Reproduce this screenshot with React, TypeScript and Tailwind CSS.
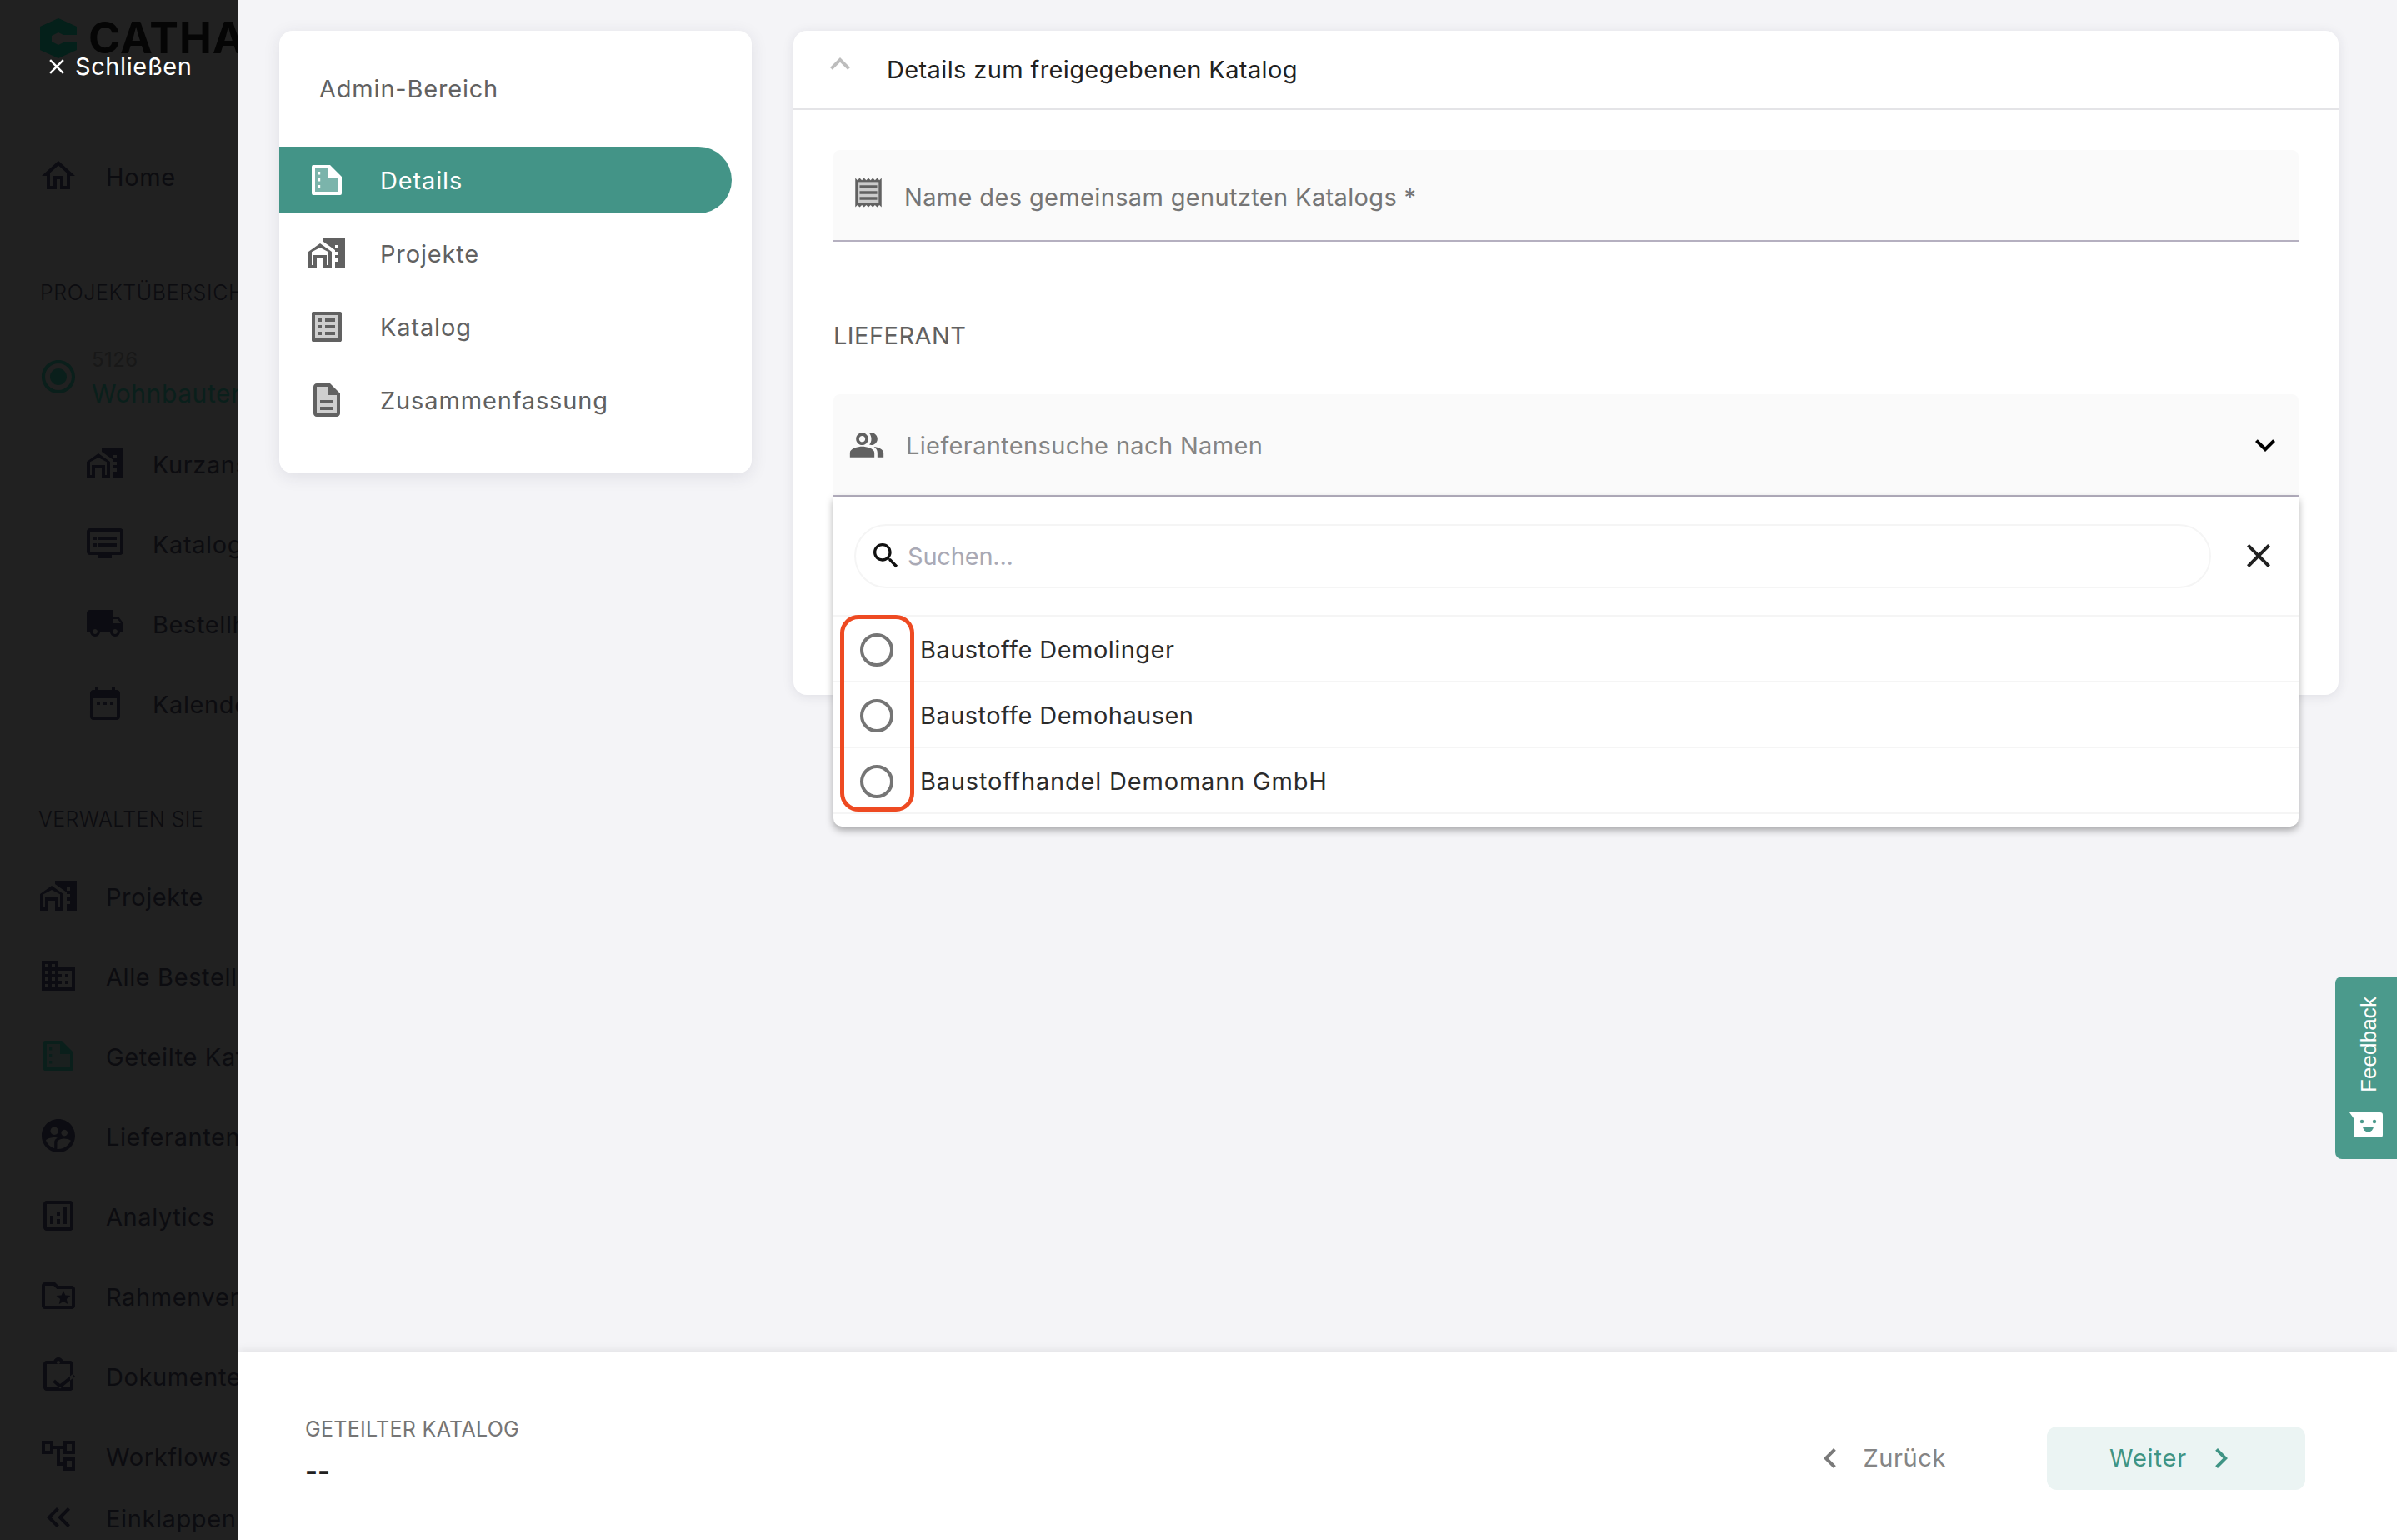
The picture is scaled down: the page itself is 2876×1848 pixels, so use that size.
import React from "react";

const P: Record<string, { d: string; l?: string }> = {
  home: { d: "M12 5.69l5 4.5V18h-2v-6H9v6H7v-7.81l5-4.5M12 3L2 12h3v8h6v-6h2v6h6v-8h3L12 3z" },
  work: { d: "M1 11v10h5v-6h4v6h5V11L8 6zM13 19v-7.9L8 8.5l-5 2.6V19h1v-6h8v6zM10 3v1.97l7 5V11h2v2h-2v2h2v2h-2v4h6V3H10zm9 6h-2V7h2v2z" },
  list: {
    l: "M5 5v14h14V5H5zm4 12H7v-2h2v2zm0-4H7v-2h2v2zm0-4H7V7h2v2zm8 8h-6v-2h6v2zm0-4h-6v-2h6v2zm0-4h-6V7h6v2z",
    d: "M11 7h6v2h-6zm0 4h6v2h-6zm0 4h6v2h-6zM7 7h2v2H7zm0 4h2v2H7zm0 4h2v2H7zM20.1 3H3.9c-.5 0-.9.4-.9.9v16.2c0 .4.4.9.9.9h16.2c.4 0 .9-.5.9-.9V3.9c0-.5-.5-.9-.9-.9zM19 19H5V5h14v14z",
  },
  desc: {
    l: "M13 4H6v16h12V9h-5V4zm3 14H8v-2h8v2zm0-6v2H8v-2h8z",
    d: "M8 16h8v2H8zm0-4h8v2H8zm6-10H6c-1.1 0-2 .9-2 2v16c0 1.1.89 2 1.99 2H18c1.1 0 2-.9 2-2V8l-6-6zm4 18H6V4h7v5h5v11z",
  },
  snip: {
    l: "M5 5v14h14v-8h-6V5z",
    d: "M4 3h10l7 7v10a1 1 0 0 1-1 1H4a1 1 0 0 1-1-1V4a1 1 0 0 1 1-1zm1 2v14h14v-8h-6V5zM6.5 7h1.6v1.8H6.5zm0 4h1.6v1.8H6.5zm0 4h1.6v1.8H6.5z",
  },
  receipt: {
    l: "M5 4.91h14v14.18H5z",
    d: "M19.5 3.5L18 2l-1.5 1.5L15 2l-1.5 1.5L12 2l-1.5 1.5L9 2 7.5 3.5 6 2 4.5 3.5 3 2v20l1.5-1.5L6 22l1.5-1.5L9 22l1.5-1.5L12 22l1.5-1.5L15 22l1.5-1.5L18 22l1.5-1.5L21 22V2l-1.5 1.5zM19 19.09H5V4.91h14v14.18zM6 15h12v2H6zm0-4h12v2H6zm0-4h12v2H6z",
  },
  people: {
    d: "M16.67 13.13C18.04 14.06 19 15.32 19 17v3h4v-3c0-2.18-3.57-3.47-6.33-3.87zM15 12c2.21 0 4-1.79 4-4s-1.79-4-4-4c-.47 0-.91.1-1.33.24C14.5 5.27 15 6.58 15 8s-.5 2.73-1.33 3.76c.42.14.86.24 1.33.24zM9 12c2.21 0 4-1.79 4-4s-1.79-4-4-4-4 1.79-4 4 1.79 4 4 4zm0-6c1.1 0 2 .9 2 2s-.9 2-2 2-2-.9-2-2 .9-2 2-2zM9 13c-2.67 0-8 1.34-8 4v3h16v-3c0-2.66-5.33-4-8-4z",
  },
  dvr: { d: "M21 3H3c-1.1 0-2 .9-2 2v12c0 1.1.9 2 2 2h5v2h8v-2h5c1.1 0 2-.9 2-2V5c0-1.1-.9-2-2-2zm0 14H3V5h18v12zm-2-9H8v2h11V8zm0 4H8v2h11v-2zM7 8H5v2h2V8zm0 4H5v2h2v-2z" },
  truck: { d: "M20 8h-3V4H3c-1.1 0-2 .9-2 2v11h2c0 1.66 1.34 3 3 3s3-1.34 3-3h6c0 1.66 1.34 3 3 3s3-1.34 3-3h2v-5l-3-4zM6 18.5c-.83 0-1.5-.67-1.5-1.5s.67-1.5 1.5-1.5 1.5.67 1.5 1.5-.67 1.5-1.5 1.5zm13.5-9l1.96 2.5H17V9.5h2.5zm-1.5 9c-.83 0-1.5-.67-1.5-1.5s.67-1.5 1.5-1.5 1.5.67 1.5 1.5-.67 1.5-1.5 1.5z" },
  cal: { d: "M19 4h-1V2h-2v2H8V2H6v2H5c-1.11 0-1.99.9-1.99 2L3 20c0 1.1.89 2 2 2h14c1.1 0 2-.9 2-2V6c0-1.1-.9-2-2-2zm0 16H5V9h14v11zM7 11h2v2H7zm4 0h2v2h-2zm4 0h2v2h-2z" },
  domain: { d: "M12 7V3H2v18h20V7H12zM6 19H4v-2h2v2zm0-4H4v-2h2v2zm0-4H4V9h2v2zm0-4H4V5h2v2zm4 12H8v-2h2v2zm0-4H8v-2h2v2zm0-4H8V9h2v2zm0-4H8V5h2v2zm10 12h-8v-2h2v-2h-2v-2h2v-2h-2V9h8v10zm-2-8h-2v2h2v-2zm0 4h-2v2h2v-2z" },
  sup: { d: "M11.99 2c-5.52 0-10 4.48-10 10s4.48 10 10 10 10-4.48 10-10-4.48-10-10-10zm3.61 6.34c1.07 0 1.93.86 1.93 1.93 0 1.07-.86 1.93-1.93 1.93-1.07 0-1.93-.86-1.93-1.93-.01-1.07.86-1.93 1.93-1.93zm-6-1.58c1.3 0 2.36 1.06 2.36 2.36 0 1.3-1.06 2.36-2.36 2.36s-2.36-1.06-2.36-2.36c0-1.31 1.05-2.36 2.36-2.36zm0 9.13v3.75c-2.4-.75-4.3-2.6-5.14-4.96 1.05-1.12 3.67-1.69 5.14-1.69.53 0 1.2.08 1.9.22-1.64.87-1.9 2.02-1.9 2.68zM11.99 20c-.27 0-.53-.01-.79-.04v-4.07c0-1.42 2.94-2.13 4.4-2.13 1.07 0 2.92.39 3.84 1.15-1.17 2.97-4.06 5.09-7.45 5.09z" },
  ana: { d: "M19 3H5c-1.1 0-2 .9-2 2v14c0 1.1.9 2 2 2h14c1.1 0 2-.9 2-2V5c0-1.1-.9-2-2-2zm0 16H5V5h14v14zM7 12h2v5H7zM15 7h2v10h-2zM11 14h2v3h-2zM11 10h2v2h-2z" },
  folder: { d: "M20 6h-8l-2-2H4c-1.1 0-2 .9-2 2v12c0 1.1.9 2 2 2h16c1.1 0 2-.9 2-2V8c0-1.1-.9-2-2-2zm0 12H4V6h5.17l2 2H20v10zm-6.92-3.96L12.39 17 15 15.47 17.61 17l-.69-2.96 2.3-1.99-3.03-.26L15 9l-1.19 2.79-3.03.26z" },
  doc: { d: "M19 3h-4.18C14.4 1.84 13.3 1 12 1s-2.4.84-2.82 2H5c-1.1 0-2 .9-2 2v14c0 1.1.9 2 2 2h14c1.1 0 2-.9 2-2V5c0-1.1-.9-2-2-2zm-7 0c.55 0 1 .45 1 1s-.45 1-1 1-1-.45-1-1 .45-1 1-1zm7 16H5V5h14v14zM22 12.4l-1.4-1.4-7.6 6-3-2.6-1.4 1.4 4.4 4z" },
  tree: { d: "M22 11V3h-7v3H9V3H2v8h7V8h2v10h4v3h7v-8h-7v3h-2V8h2v3h7zM7 9H4V5h3v4zm10 6h3v4h-3v-4zm0-10h3v4h-3V5z" },
  dbl: { d: "M17.59 18 19 16.59 14.42 12 19 7.41 17.59 6l-6 6zM11 18l1.41-1.41L7.83 12l4.58-4.59L11 6l-6 6z" },
  radio: { d: "M12 7c-2.76 0-5 2.24-5 5s2.24 5 5 5 5-2.24 5-5-2.24-5-5-5zm0-5C6.48 2 2 6.48 2 12s4.48 10 10 10 10-4.48 10-10S17.52 2 12 2zm0 18c-4.42 0-8-3.58-8-8s3.58-8 8-8 8 3.58 8 8-3.58 8-8 8z" },
  search: { d: "M15.5 14h-.79l-.28-.27C15.41 12.59 16 11.11 16 9.5 16 5.91 13.09 3 9.5 3S3 5.91 3 9.5 5.91 16 9.5 16c1.61 0 3.09-.59 4.23-1.57l.27.28v.79l5 4.99L20.49 19l-4.99-5zm-6 0C7.01 14 5 11.99 5 9.5S7.01 5 9.5 5 14 7.01 14 9.5 11.99 14 9.5 14z" },
  close: { d: "M19 6.41L17.59 5 12 10.59 6.41 5 5 6.41 10.59 12 5 17.59 6.41 19 12 13.41 17.59 19 19 17.59 13.41 12z" },
  down: { d: "M16.59 8.59L12 13.17 7.41 8.59 6 10l6 6 6-6z" },
  up: { d: "M12 8l-6 6 1.41 1.41L12 10.83l4.59 4.58L18 14z" },
  left: { d: "M15.41 7.41L14 6l-6 6 6 6 1.41-1.41L10.83 12z" },
  right: { d: "M10 6L8.59 7.41 13.17 12l-4.58 4.59L10 18l6-6z" },
};

function I({ n, className = "" }: { n: string; className?: string }) {
  const p = P[n];
  return (
    <svg viewBox="0 0 24 24" fill="currentColor" fillRule="evenodd" className={"shrink-0 " + className}>
      {p.l && <path d={p.l} opacity={0.3} />}
      <path d={p.d} />
    </svg>
  );
}

function Side({ icon, label, sub, tone }: { icon: string; label: string; sub?: boolean; tone?: boolean }) {
  return (
    <div className={"flex items-center h-[96px] shrink-0 " + (sub ? "pl-[102px]" : "pl-[46px]")}>
      <I n={icon} className={"w-[48px] h-[48px] " + (tone ? "text-[#0a1f1b]" : "text-[#0c0c12]")} />
      <span className="ml-[33px] pt-[3px] text-[29px] text-[#0c0c10] tracking-[0.6px]">{label}</span>
    </div>
  );
}

function Sidebar() {
  return (
    <aside className="relative w-[286px] h-full shrink-0 bg-[#212121] overflow-hidden whitespace-nowrap flex flex-col">
      <div className="flex items-center mt-[22px] h-[48px] pl-[46px] shrink-0">
        <svg viewBox="0 0 48 48" className="w-[48px] h-[48px] shrink-0 text-[#04201a]" fill="currentColor">
          <path d="M24 0 46 10v10H30l-6-3-8 4v7l8 4 6-3h16v9L24 48 2 38V10z" />
        </svg>
        <span className="ml-[12px] text-[52px] font-bold text-[#050505] leading-none tracking-[1px]">CATHAGO</span>
      </div>
      <div className="absolute left-[53px] top-[60px] flex items-center text-white">
        <I n="close" className="w-[30px] h-[30px]" />
        <span className="ml-[7px] text-[29px] leading-[40px] tracking-[0.6px]">Schließen</span>
      </div>
      <div className="mt-[93px] shrink-0"><Side icon="home" label="Home" /></div>
      <div className="mt-[77px] h-[30px] pl-[48px] text-[25px] leading-[30px] text-[#0c0c10] tracking-[0.6px] font-light shrink-0">PROJEKTÜBERSICHT</div>
      <div className="mt-[46px] h-[80px] pl-[46px] flex items-center shrink-0">
        <I n="radio" className="w-[48px] h-[48px] text-[#0a1f1b]" />
        <div className="ml-[16px] pt-[2px] flex flex-col">
          <span className="text-[24px] leading-[36px] text-[#181818] tracking-[0.4px]">5126</span>
          <span className="text-[30px] leading-[40px] pt-[2px] text-[#0a1f1b] tracking-[0.6px]">Wohnbauten</span>
        </div>
      </div>
      <div className="mt-[16px] flex flex-col shrink-0">
        <Side sub icon="work" label="Kurzansicht" />
        <Side sub icon="dvr" label="Katalog" />
        <Side sub icon="truck" label="Bestellhistorie" />
        <Side sub icon="cal" label="Kalender" />
      </div>
      <div className="mt-[76px] h-[30px] pl-[46px] text-[25px] leading-[30px] text-[#0c0c10] font-light tracking-[0.4px] shrink-0">VERWALTEN SIE</div>
      <div className="mt-[29px] flex flex-col shrink-0">
        <Side icon="work" label="Projekte" />
        <Side icon="domain" label="Alle Bestellungen" />
        <Side tone icon="snip" label="Geteilte Kataloge" />
        <Side icon="sup" label="Lieferanten" />
        <Side icon="ana" label="Analytics" />
        <Side icon="folder" label="Rahmenverträge" />
        <Side icon="doc" label="Dokumente" />
        <Side icon="tree" label="Workflows" />
      </div>
      <div className="flex items-center h-[52px] pl-[46px] shrink-0">
        <I n="dbl" className="w-[48px] h-[48px] text-[#0c0c12]" />
        <span className="ml-[33px] pt-[3px] text-[29px] text-[#0c0c10] tracking-[0.6px]">Einklappen</span>
      </div>
    </aside>
  );
}

function Nav({ icon, label, active }: { icon: string; label: string; active?: boolean }) {
  return (
    <div className={"flex items-center h-[80px] mb-[8px] w-[543px] pl-[33px] rounded-r-[40px] " + (active ? "bg-[#439487] text-white" : "text-[#616161]")}>
      <I n={icon} className="w-[48px] h-[48px]" />
      <span className="ml-[40px] pt-[1px] text-[29px] tracking-[0.85px]">{label}</span>
    </div>
  );
}

function Option({ label, wide }: { label: string; wide?: boolean }) {
  return (
    <div className="flex items-center h-[79px] border-b-2 border-[#f5f5f5] pl-[32px] pt-[2px]">
      <span className="w-[40px] h-[40px] rounded-full border-4 border-[#757575] shrink-0" />
      <span className={"ml-[32px] pt-[1px] text-[29px] text-[#2b2b2b] " + (wide ? "tracking-[0.8px]" : "tracking-[0.45px]")}>{label}</span>
    </div>
  );
}

export default function App() {
  return (
    <div className="relative w-[2876px] h-[1848px] flex overflow-hidden bg-[#f4f4f7] font-[family-name:Inter,sans-serif]">
      <Sidebar />
      <div className="flex-1 min-w-0 flex flex-col">
        <main className="flex-1 min-h-0 flex items-start gap-[50px] pl-[49px] pr-[70px] pt-[37px]">
          <section className="w-[567px] h-[531px] shrink-0 bg-white rounded-[16px] shadow-[0_4px_20px_rgba(40,40,70,0.10)]">
            <div className="h-[139px] pl-[48px] pt-[50px] text-[29px] leading-[40px] text-[#616161] tracking-[0.8px]">Admin-Bereich</div>
            <Nav active icon="snip" label="Details" />
            <Nav icon="work" label="Projekte" />
            <Nav icon="list" label="Katalog" />
            <Nav icon="desc" label="Zusammenfassung" />
          </section>
          <section className="flex-1 h-[797px] bg-white rounded-[16px] shadow-[0_2px_14px_rgba(40,40,70,0.10)]">
            <header className="h-[95px] border-b-2 border-[#e4e4e7] flex items-center pl-[32px]">
              <I n="up" className="w-[48px] h-[48px] text-[#bdbdbd] -mt-[14px]" />
              <span className="ml-[32px] text-[29px] text-[#212121] tracking-[0.38px]">Details zum freigegebenen Katalog</span>
            </header>
            <div className="px-[48px] pt-[48px]">
              <div className="h-[110px] bg-[#fafafa] border-b-2 border-[#b5b0c0] rounded-t-[8px] flex items-center pl-[21px]">
                <I n="receipt" className="w-[42px] h-[42px] text-[#616161] -mt-[6px]" />
                <span className="ml-[22px] pt-[5px] text-[29px] text-[#757575] tracking-[0.35px]">Name des gemeinsam genutzten Katalogs *</span>
              </div>
              <div className="mt-[93px] h-[39px] text-[29px] leading-[40px] text-[#616161] tracking-[0.45px]">LIEFERANT</div>
              <div className="relative mt-[51px]">
                <div className="h-[123px] bg-[#fafafa] border-b-2 border-[#b5b0c0] rounded-t-[8px] flex items-center pl-[18px] pr-[16px]">
                  <I n="people" className="w-[44px] h-[44px] text-[#616161]" />
                  <span className="ml-[25px] pt-[2px] text-[29px] text-[#858585] tracking-[0.35px]">Lieferantensuche nach Namen</span>
                  <I n="down" className="w-[48px] h-[48px] text-black ml-auto" />
                </div>
                <div className="absolute left-0 right-0 top-full z-10 h-[396px] bg-white rounded-b-[10px] shadow-[0_4px_10px_rgba(0,0,0,0.35)]">
                  <div className="h-[144px] flex items-center pl-[25px] border-b-2 border-[#f5f5f5]">
                    <div className="w-[1628px] h-[77px] rounded-full border-2 border-[#f5f5f5] flex items-center pl-[16px]">
                      <I n="search" className="w-[40px] h-[40px] text-[#111111]" />
                      <span className="ml-[6px] pt-[1px] text-[29px] text-[#a9a9b5] tracking-[-0.2px]">Suchen...</span>
                    </div>
                    <I n="close" className="w-[48px] h-[48px] text-[#212121] ml-[33px]" />
                  </div>
                  <Option label="Baustoffe Demolinger" />
                  <Option label="Baustoffe Demohausen" />
                  <Option wide label="Baustoffhandel Demomann GmbH" />
                  <div className="absolute left-[8px] top-[142px] w-[89px] h-[236px] rounded-[22px] border-[5px] border-[#ee4a22]" />
                </div>
              </div>
            </div>
          </section>
        </main>
        <footer className="h-[226px] shrink-0 bg-white shadow-[0_-2px_10px_rgba(0,0,0,0.08)] flex items-center pl-[80px] pr-[110px]">
          <div className="flex flex-col mt-[12px]">
            <span className="text-[25px] leading-[34px] text-[#757575] tracking-[0.3px]">GETEILTER KATALOG</span>
            <span className="mt-[16px] text-[32px] leading-[36px] font-bold text-[#212121]">--</span>
          </div>
          <div className="ml-auto mt-[30px] flex items-center text-[#858585]">
            <I n="left" className="w-[48px] h-[48px] text-[#7a7a7a]" />
            <span className="ml-[15px] text-[29px] tracking-[0.6px]">Zurück</span>
          </div>
          <div className="ml-[121px] mt-[30px] w-[310px] h-[76px] rounded-[12px] bg-[#ebf4f3] flex items-center pl-[75px] text-[#3f9484]">
            <span className="text-[29px] tracking-[0.8px]">Weiter</span>
            <I n="right" className="w-[48px] h-[48px] ml-[17px]" />
          </div>
        </footer>
      </div>
      <div className="absolute right-0 top-[1172px] w-[74px] h-[219px] bg-[#4b9a8c] rounded-l-[8px] flex flex-col items-center pt-[24px]">
        <span className="[writing-mode:vertical-rl] rotate-180 pr-[6px] font-[family-name:'Liberation_Sans',sans-serif] text-[26px] leading-[30px] text-white tracking-[0.1px]">Feedback</span>
        <svg viewBox="0 0 40 30" className="w-[40px] h-[30px] mt-[24px]">
          <path d="M0 0h37a3 3 0 0 1 3 3v24a3 3 0 0 1-3 3H8a3 3 0 0 1-3-3V7z" fill="#fff" />
          <circle cx="15" cy="11" r="2.2" fill="#4b9a8c" />
          <circle cx="30" cy="11" r="2.2" fill="#4b9a8c" />
          <path d="M16 17h13a6.5 6.5 0 0 1-13 0z" fill="#4b9a8c" />
        </svg>
      </div>
    </div>
  );
}
